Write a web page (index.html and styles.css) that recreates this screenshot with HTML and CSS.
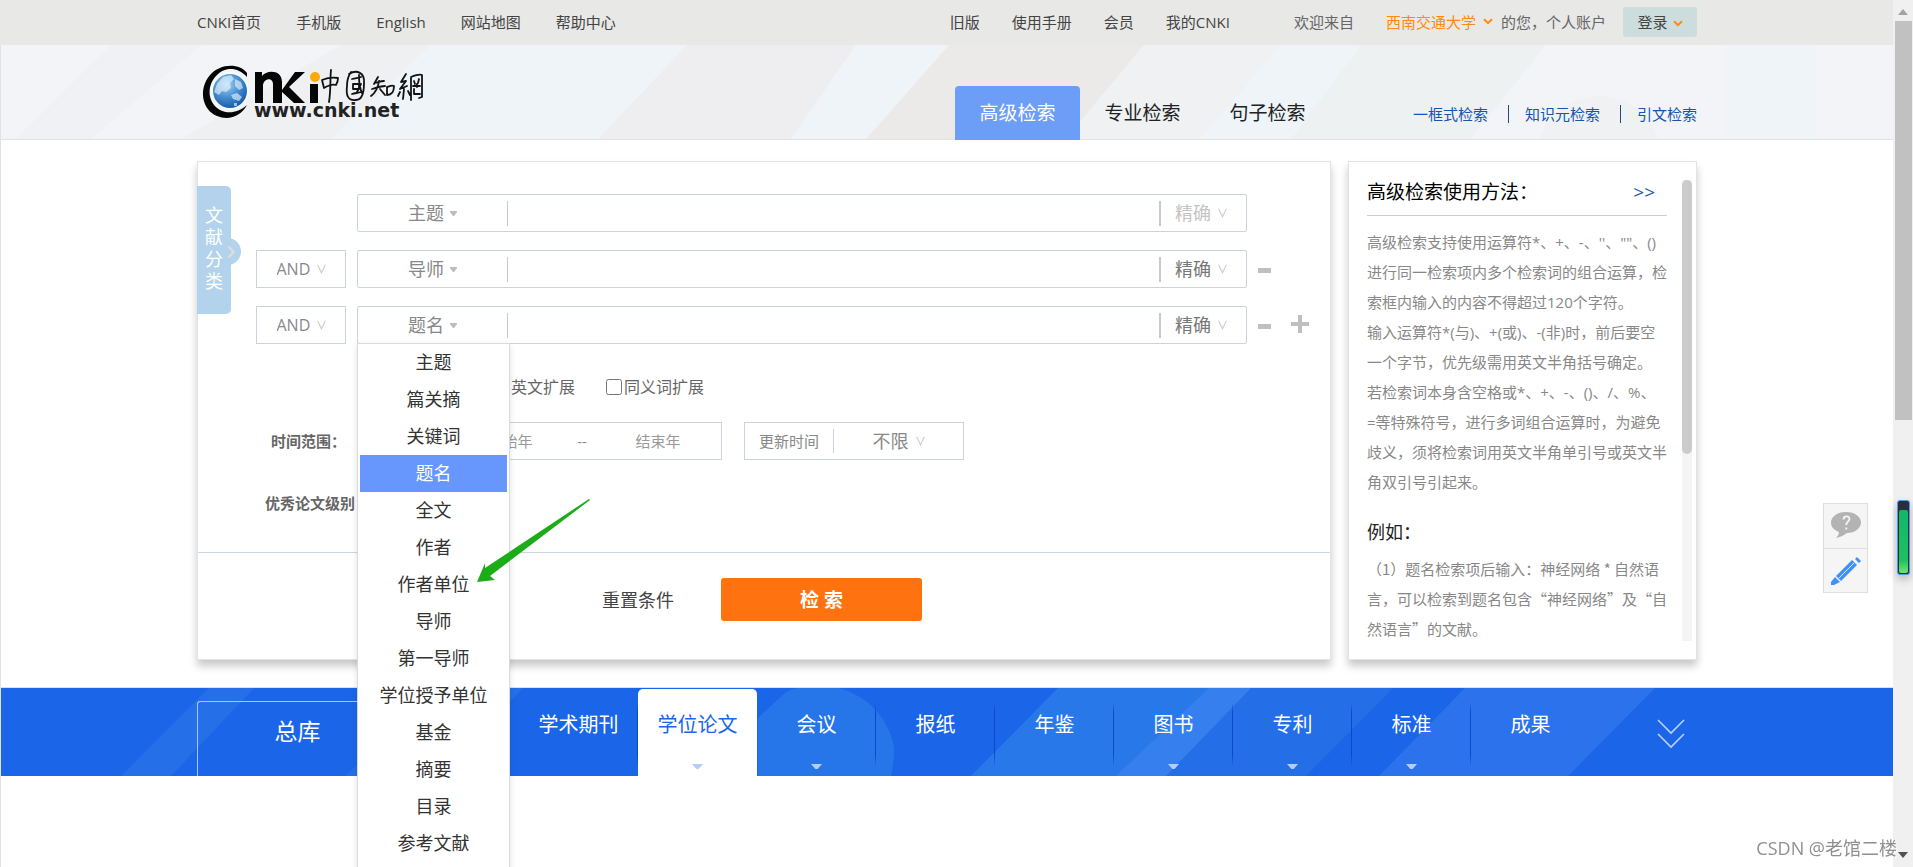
FILE: index.html
```html
<!DOCTYPE html>
<html lang="zh-CN">
<head>
<meta charset="utf-8">
<title>高级检索 - 中国知网</title>
<link rel="stylesheet" href="styles.css">
</head>
<body>
<svg class="defs" aria-hidden="true">
  <symbol id="caret" viewBox="0 0 7 5"><path d="M0 0h7v1L4 5H3L0 1z" fill="#bbb"/></symbol>
  <symbol id="vee" viewBox="0 0 9 10"><path d="M.6.8l3.9 8 3.9-8" fill="none" stroke="#ccc" stroke-width="1.1"/></symbol>
  <symbol id="down" viewBox="0 0 10 7"><path d="M1 1.2l4 4 4-4" fill="none" stroke="#ff8a0c" stroke-width="2"/></symbol>
</svg>
<div class="page">
  <div class="topbar">
    <div class="wrap topbar-in">
      <nav class="top-left">
        <a href="#">CNKI首页</a><a href="#">手机版</a><a href="#">English</a><a href="#">网站地图</a><a href="#">帮助中心</a>
      </nav>
      <nav class="top-right">
        <a href="#">旧版</a><a href="#">使用手册</a><a href="#">会员</a><a href="#">我的CNKI</a>
      </nav>
      <span class="welcome">欢迎来自</span>
      <a class="school" href="#">西南交通大学<svg class="i-down"><use href="#down"/></svg></a>
      <span class="account">的您，个人账户</span>
      <button class="login" type="button">登录<svg class="i-down"><use href="#down"/></svg></button>
    </div>
  </div>

  <header class="header">
    <svg class="backdrop" viewBox="0 0 1892 94" preserveAspectRatio="none" aria-hidden="true">
      <path d="M0 0h1892v94H0z" fill="#f2f4f7"/>
      <path d="M110 0h90L90 94H15z" fill="#f0f1f4"/>
      <path d="M340 0h90L330 94H180z" fill="#eff0f2"/>
      <path d="M430 0h256L597 94H330z" fill="#eff4f9"/>
      <path d="M686 0h169l-65 94H597z" fill="#eeedf0"/>
      <path d="M855 0h93l-83 94h-75z" fill="#eff4f9"/>
      <path d="M948 0h195l-78 94H865z" fill="#eceae9"/>
      <path d="M1143 0h137l-80 94h-135z" fill="#eff1f3"/>
      <path d="M1280 0h80l-70 94h-90z" fill="#eff4f9"/>
      <path d="M1360 0h185l-75 94h-180z" fill="#eef1f2"/>
      <path d="M1725 0h90v94h-90z" fill="#eff4f9"/>
      <circle cx="1598" cy="113" r="62" fill="#eff1f2"/>
    </svg>
    <div class="wrap header-in">
      <a class="logo" href="#" aria-label="CNKI 中国知网">
        <svg width="232" height="60" viewBox="0 0 232 60">
          <defs>
            <radialGradient id="globe" cx=".4" cy=".3" r=".75"><stop offset="0" stop-color="#a9d3f0"/><stop offset=".5" stop-color="#4a90d2"/><stop offset="1" stop-color="#1257a8"/></radialGradient>
          </defs>
          <path d="M50 11C42 0 22 2 13 13 1 27 5 48 20 54c12 5 24 0 30-11-9 8-19 9-27 5C11 41 9 25 19 14 27 5 40 4 50 15z" fill="#050505"/>
          <ellipse cx="33" cy="29" rx="19" ry="19" fill="#f7fbff"/>
          <circle cx="33" cy="29" r="17" fill="url(#globe)"/>
          <path d="M20 22l6-7 8-2 3 4-4 4 1 5-5 4-4-1-3 4-5-3zM38 17l6 3 2 6-4 2-4-4zM34 33l6-2 5 4-3 4-6-2zM37 41h3v3h-3z" fill="#e4f2fc" opacity=".65"/>
          <path d="M58 10h7v4c4-6 20-7 20 6v8L98 10h10L92 25l16 16H97L85 30v11h-9V22c0-7-9-6-10 1v18h-8z" fill="#050505"/>
          <path d="M113 22h8v19h-8z" fill="#050505"/>
          <circle cx="118" cy="15" r="5" fill="#fda90a"/>
          <g fill="none" stroke="#111" stroke-width="1.8" stroke-linecap="round" stroke-linejoin="round">
            <path d="M125 18l2 8c5-3 9-4 12-3 2-3 2-5 2-7-6-1-11 0-16 2M134 8c-1 8 0 20-2 32"/>
            <path d="M152 12c8-5 16-1 15 9 0 11-2 17-8 17-9 1-10-6-9-14 0-7 1-10 4-14M155 17c4-1 7-1 9-2M156 22h6v5h-6zM155 32c3-1 6-1 9-2M162 13c0 8 1 14 3 18M164 22l-4 8"/>
            <path d="M181 15l-4 7M178 21c4-1 6-2 9-2M182 19c-1 8-4 12-8 15M175 27c4-1 9-3 13-3M183 27l5 6M190 25v8c4 0 7-2 7-9-2-1-4 0-7 1"/>
            <path d="M209 12l-5 8 5-1-6 8 7-3M207 27l-1 10M203 30l-2 4M211 29l2 4M214 16v22M214 15c5-2 9-3 11-2v22l-3 1M217 19l1 3M222 17l-1 4M216 24h7M217 27v5h6M220 22v3"/>
          </g>
          <text x="57" y="55" class="logo-url">www.cnki.net</text>
        </svg>
      </a>
      <nav class="modes">
        <a class="mode on" href="#">高级检索</a><a class="mode" href="#">专业检索</a><a class="mode" href="#">句子检索</a>
      </nav>
      <nav class="links">
        <a href="#">一框式检索</a><i></i><a href="#">知识元检索</a><i></i><a href="#">引文检索</a>
      </nav>
    </div>
  </header>

  <main class="wrap main">
    <form class="panel search">
      <button class="side-tab" type="button">文献分类<span class="bump"><svg width="9" height="14" viewBox="0 0 9 14"><path d="M1.500 1.500l5 5.500-5 5.500" fill="none" stroke="#dcdde0" stroke-width="2.400"/></svg></span></button>
      <div class="rows">
        <div class="row">
          <div class="field">
            <label class="pick kind"><select aria-label="检索项一"><option>主题</option></select><svg class="i-caret"><use href="#caret"/></svg></label>
            <input class="term" type="text" aria-label="检索词一">
            <label class="pick match off"><select aria-label="匹配一"><option>精确</option></select><svg class="i-vee"><use href="#vee"/></svg></label>
          </div>
        </div>
        <div class="row">
          <label class="pick logic"><select aria-label="逻辑二"><option>AND</option></select><svg class="i-vee"><use href="#vee"/></svg></label>
          <div class="field">
            <label class="pick kind"><select aria-label="检索项二"><option>导师</option></select><svg class="i-caret"><use href="#caret"/></svg></label>
            <input class="term" type="text" aria-label="检索词二">
            <label class="pick match"><select aria-label="匹配二"><option>精确</option></select><svg class="i-vee"><use href="#vee"/></svg></label>
          </div>
          <button class="adjust" type="button" aria-label="删除"><svg width="13" height="20" viewBox="0 0 13 20"><path d="M0 9h13v5H0z" fill="#bfbfbf"/></svg></button>
        </div>
        <div class="row">
          <label class="pick logic"><select aria-label="逻辑三"><option>AND</option></select><svg class="i-vee"><use href="#vee"/></svg></label>
          <div class="field">
            <label class="pick kind"><select aria-label="检索项三"><option>题名</option></select><svg class="i-caret"><use href="#caret"/></svg></label>
            <input class="term" type="text" aria-label="检索词三">
            <label class="pick match"><select aria-label="匹配三"><option>精确</option></select><svg class="i-vee"><use href="#vee"/></svg></label>
            <ul class="menu" role="listbox" aria-label="检索项">
              <li role="option">主题</li><li role="option">篇关摘</li><li role="option">关键词</li><li role="option" class="on" aria-selected="true">题名</li><li role="option">全文</li><li role="option">作者</li><li role="option">作者单位</li><li role="option">导师</li><li role="option">第一导师</li><li role="option">学位授予单位</li><li role="option">基金</li><li role="option">摘要</li><li role="option">目录</li><li role="option">参考文献</li>
            </ul>
            <svg class="pointer" width="115" height="86" viewBox="0 0 115 86" aria-hidden="true"><path d="M113 1L9 70V65L1 84l18-2-5-4L114 2z" fill="#1cac19"/></svg>
          </div>
          <button class="adjust" type="button" aria-label="删除"><svg width="13" height="20" viewBox="0 0 13 20"><path d="M0 9h13v5H0z" fill="#bfbfbf"/></svg></button>
          <button class="adjust add" type="button" aria-label="添加"><svg width="18" height="20" viewBox="0 0 18 20"><path d="M7 0h4v7h7v4h-7v7H7v-7H0V7h7z" fill="#bfbfbf"/></svg></button>
        </div>
      </div>
      <div class="checks">
        <label><input type="checkbox">中英文扩展</label>
        <label><input type="checkbox">同义词扩展</label>
      </div>
      <div class="times">
        <span class="caption">时间范围：</span>
        <div class="range"><input type="text" placeholder="起始年" aria-label="起始年"><span>--</span><input class="end" type="text" placeholder="结束年" aria-label="结束年"></div>
        <div class="update"><span class="update-name">更新时间</span><label class="pick"><select aria-label="更新时间"><option>不限</option></select><svg class="i-vee"><use href="#vee"/></svg></label></div>
      </div>
      <div class="level caption">优秀论文级别：</div>
      <div class="actions">
        <button class="reset" type="reset">重置条件</button>
        <button class="go" type="submit">检 索</button>
      </div>
    </form>

    <aside class="panel help">
      <div class="help-text">
        <h2>高级检索使用方法：<a href="#">&gt;&gt;</a></h2>
        <p>高级检索支持使用运算符*、+、-、''、""、()<br>进行同一检索项内多个检索词的组合运算，检<br>索框内输入的内容不得超过120个字符。<br>输入运算符*(与)、+(或)、-(非)时，前后要空<br>一个字节，优先级需用英文半角括号确定。<br>若检索词本身含空格或*、+、-、()、/、%、<br>=等特殊符号，进行多词组合运算时，为避免<br>歧义，须将检索词用英文半角单引号或英文半<br>角双引号引起来。</p>
        <h3>例如：</h3>
        <p class="example">（1）题名检索项后输入：神经网络 * 自然语<br>言，可以检索到题名包含“神经网络”及“自<br>然语言”的文献。</p>
      </div>
      <div class="help-bar"><div></div></div>
    </aside>
  </main>

  <div class="band">
    <svg class="backdrop" viewBox="0 0 1892 88" preserveAspectRatio="none" aria-hidden="true">
      <path d="M0 0h1892v88H0z" fill="#1b66e8"/>
      <path d="M208 0h45l-83 88h-50zM430 0h92l-82 88h-95z" fill="#2570e9"/>
      <path d="M757 30L785 4C830-16 885 10 893 60q0 16-3 28H757z" fill="#2676ea"/>
      <path d="M1057 0h193l-85 88H970z" fill="#2878ea"/>
      <path d="M1247 0h145l-87 88h-143z" fill="#246fe8"/>
      <path d="M1208 0h42l-85 88h-50z" fill="#3580ee"/>
      <path d="M1464 0h190l-87 88h-189z" fill="#2c72ec"/>
    </svg>
    <nav class="wrap band-in">
      <a class="all" href="#">总库</a>
      <a class="lib" href="#">学术期刊</a>
      <a class="lib on more" href="#">学位论文</a>
      <a class="lib more" href="#">会议</a>
      <a class="lib" href="#">报纸</a>
      <a class="lib" href="#">年鉴</a>
      <a class="lib more" href="#">图书</a>
      <a class="lib more" href="#">专利</a>
      <a class="lib more" href="#">标准</a>
      <a class="lib last" href="#">成果</a>
      <button class="expand" type="button" aria-label="展开"><svg width="28" height="30" viewBox="0 0 28 30"><path d="M1 1l13 13L27 1M1 15l13 13 13-13" fill="none" stroke="#b9d1f8" stroke-width="1.600"/></svg></button>
    </nav>
  </div>
</div>

<div class="tools">
  <button type="button" aria-label="帮助"><svg width="32" height="28" viewBox="0 0 32 28"><path d="M16 0c9 0 15 5 15 10.500S25 21 17 21c-3 2-6 4-11 5 2-2 3-4 3-6-5-2-8-5-8-9.500C1 5 7 0 16 0z" fill="#b3b3b3"/><path d="M13.500 7.500c0-4 6-4 6-.5 0 2.500-3.200 2.500-3.200 6M16.300 15.500v2" fill="none" stroke="#f5f5f5" stroke-width="1.800"/></svg></button>
  <button type="button" aria-label="反馈"><svg width="32" height="32" viewBox="0 0 32 32"><path d="M6 21L22 5l5 5L11 26z" fill="#3f90fc"/><path d="M8.500 23.500L24.500 7.500" stroke="#d7e8ff" stroke-width="1"/><path d="M25 4l2-2 4 4-2 2zM5 22l5 5-6 3H1v-3z" fill="#3f90fc"/></svg></button>
</div>
<div class="scrollbar" aria-hidden="true">
  <svg width="10" height="6" viewBox="0 0 10 6"><path d="M0 6l5-6 5 6z" fill="#a3a3a3"/></svg>
  <div class="thumb"></div>
  <svg width="10" height="6" viewBox="0 0 10 6"><path d="M0 0h10L5 6z" fill="#505050"/></svg>
</div>
<div class="meter" aria-hidden="true"><div></div></div>
<div class="credit">CSDN @老馆二楼</div>
</body>
</html>
```
FILE: styles.css
```css
* { box-sizing: border-box; }
body {
  margin: 0;
  height: 100vh;
  overflow: hidden;
  background: #fff;
  color: #333;
  font: 15px/24px "Open Sans", "Noto Sans CJK SC", sans-serif;
}
a { color: inherit; text-decoration: none; }
button, select, input { font: inherit; color: inherit; border: 0; background: none; padding: 0; margin: 0; }
select { appearance: none; cursor: pointer; }
.defs { position: absolute; width: 0; height: 0; }
.page { min-height: 100vh; margin-right: 20px; border-left: 1px solid #e3e3e3; }
.wrap { width: 1500px; max-width: 100%; margin: 0 auto; }
.i-caret { width: 7px; height: 5px; }
.i-vee { width: 9px; height: 10px; }
.i-down { width: 10px; height: 7px; }
.backdrop { position: absolute; inset: 0; width: 100%; height: 100%; z-index: -1; }

/* top bar */
.topbar { background: #e8e8e6; margin-left: -1px; padding-left: 1px; color: #444; }
.topbar-in { display: flex; align-items: center; height: 45px; padding-bottom: 2px; }
.top-left { display: flex; gap: 35px; }
.top-right { display: flex; gap: 32px; margin-left: auto; }
.welcome { margin-left: 64px; color: #666; }
.school { margin-left: 32px; color: #ff8a0c; }
.school svg { margin: 0 8px 3px 7px; vertical-align: middle; }
.account { color: #666; }
.login { width: 74px; height: 30px; margin-left: 17px; border-radius: 3px; background: #cddcdc; }
.login svg { margin-left: 5px; vertical-align: middle; }

/* header */
.header { position: relative; z-index: 0; border-bottom: 1px solid #e0e2e4; }
.header-in { display: flex; align-items: flex-end; height: 94px; }
.logo { align-self: center; line-height: 0; }
.logo-url { font: bold 19px "DejaVu Sans", sans-serif; fill: #222; }
.modes { display: flex; margin: 0 83px -1px auto; }
.mode { width: 125px; height: 54px; line-height: 54px; text-align: center; font-size: 19px; color: #222; }
.mode.on { background: #6c9df7; color: #fff; border-radius: 4px 4px 0 0; }
.links { display: flex; align-items: center; color: #1454b5; padding-bottom: 13px; }
.links i { width: 1px; height: 18px; margin: 0 16px 0 20px; background: #1f4a8c; }

/* panels */
.main { display: flex; gap: 17px; padding: 21px 0 27px; }
.panel { border: 1px solid #e1e3e5; background: #fff; box-shadow: 0 6px 8px rgba(0, 0, 0, .22); }
.search { position: relative; z-index: 2; flex: 1; padding: 32px 0 37px; }
.side-tab {
  position: absolute; z-index: 0; left: -1px; top: 24px; width: 34px; height: 128px; padding: 0 8px 4px;
  border-radius: 0 5px 5px 0; background: #b3d3ec; color: #fff; font-size: 18px; line-height: 22px;
}
.bump {
  position: absolute; z-index: -1; right: -10px; top: 52px; width: 27px; height: 27px; padding-right: 5px;
  border-radius: 14px; background: #b3d3ec; display: flex; align-items: center; justify-content: flex-end; line-height: 0;
}
.rows { display: grid; gap: 18px; padding-left: 58px; }
.row { display: grid; grid-template-columns: 90px 890px 13px auto; column-gap: 11px; align-items: center; justify-content: start; }
.row .field { grid-column: 2; }
.adjust { line-height: 0; }
.add { margin-left: 9px; }
.pick { display: flex; align-items: center; justify-content: center; gap: 11px; color: #888; font-size: 18px; }
.logic { height: 38px; border: 1px solid #cbd3dd; font-size: 16px; gap: 6px; }
.field { position: relative; display: flex; align-items: center; height: 38px; border: 1px solid #cbd3dd; border-radius: 2px; }
.kind { width: 150px; height: 25px; gap: 6px; border-right: 1px solid #c6c9ce; }
.term { flex: 1; min-width: 0; height: 34px; padding: 0 10px; font-size: 16px; outline: 0; }
.match { width: 87px; height: 25px; border-left: 2px solid #c9c9c9; gap: 7px; padding-right: 5px; color: #777; }
.match.off { color: #c4c4c4; }
.menu {
  position: absolute; left: -1px; top: 36px; z-index: 3; width: 153px; margin: 0; padding: 0 2px 30px;
  list-style: none; background: #fff; border: 1px solid #d9dbdd; box-shadow: 0 2px 6px rgba(0, 0, 0, .12);
  text-align: center; font-size: 18px; line-height: 37px; color: #333;
}
.menu li { height: 37px; }
.menu .on { background: #6796fd; color: #fff; }
.pointer { position: absolute; left: 118px; top: 191px; z-index: 4; }
.checks { display: flex; gap: 31px; margin-top: 31px; padding-left: 279px; font-size: 16px; color: #666; }
.checks label { display: flex; align-items: center; gap: 2px; }
.checks input { width: 16px; height: 16px; }
.caption { font-weight: bold; color: #666; }
.times { display: flex; align-items: center; gap: 22px; margin-top: 23px; padding-left: 73px; color: #888; }
.times .caption { width: 64px; white-space: nowrap; }
.range, .update { display: flex; align-items: center; height: 38px; border: 1px solid #cbd3dd; }
.range { width: 365px; padding-left: 89px; }
.range input { flex: 1; min-width: 0; text-align: center; }
.range .end { padding-left: 8px; }
.range span { padding-left: 4px; }
.range input::placeholder { color: #999; }
.update { width: 220px; }
.update-name { padding: 0 14px; border-right: 1px solid #cbd3dd; }
.update .pick { flex: 1; gap: 7px; }
.level { margin-top: 31px; padding: 0 0 37px 67px; border-bottom: 1px solid #cbd3dd; }
.actions { display: flex; align-items: center; gap: 47px; margin-top: 25px; padding-left: 404px; }
.reset { font-size: 18px; color: #444; }
.go { width: 201px; height: 43px; border-radius: 3px; background: #ff7210; color: #fff; font-size: 19px; font-weight: bold; }

/* help */
.help { display: flex; justify-content: space-between; width: 349px; height: 499px; padding: 18px 4px 18px 18px; }
.help-text { width: 300px; overflow: hidden; white-space: nowrap; }
.help h2 {
  display: flex; justify-content: space-between; margin: 0 0 11px; padding: 0 12px 11px 0;
  border-bottom: 1px solid #cccdd9; font-size: 19px; font-weight: normal; color: #000;
}
.help h2 a { color: #1454b5; }
.help p { margin: 0; line-height: 30px; color: #888; }
.help h3 { margin: 23px 0 10px; font-size: 18px; font-weight: normal; color: #222; }
.help .example { font-family: "Noto Sans CJK SC", sans-serif; }
.help-bar { width: 10px; background: #f4f4f4; }
.help-bar div { height: 274px; border-radius: 5px; background: #cbcbcb; }

/* library band */
.band { position: relative; z-index: 0; border-top: 1px solid #dcdfe3; }
.band-in { display: flex; align-items: flex-end; height: 88px; color: #fff; }
.all {
  width: 200px; height: 75px; margin-right: 122px; border: solid #a9c6f5; border-width: 1px 0 0 1px;
  border-radius: 3px 0 0; text-align: center; font-size: 23px; line-height: 58px;
}
.lib { position: relative; width: 119px; height: 87px; text-align: center; font-size: 20px; line-height: 72px; }
.lib::before {
  content: ""; position: absolute; right: 0; top: 14px; width: 1px; height: 64px;
  background: linear-gradient(transparent, #0c48cc 15%, #0c48cc 80%, transparent);
}
.lib.last::before, .lib.on::before { display: none; }
.lib.on { background: #fff; color: #1b66e8; border-radius: 5px 5px 0 0; }
.more::after {
  content: ""; position: absolute; left: 54px; bottom: 7px; width: 11px; height: 5px;
  background: #b4cdf8; clip-path: polygon(0 0, 100% 0, 60% 100%, 40% 100%);
}
.expand { margin: 0 12px 27px auto; line-height: 0; }

/* floating pieces */
.tools { position: fixed; right: 45px; top: 503px; width: 45px; border: 1px solid #dedede; background: #f5f5f5; }
.tools button { display: flex; width: 100%; height: 44px; align-items: center; justify-content: center; }
.tools button + button { border-top: 1px solid #dedede; }
.scrollbar {
  position: fixed; right: 0; top: 0; bottom: 0; width: 20px; background: #f0f0f0;
  display: flex; flex-direction: column; align-items: center; padding: 9px 0;
}
.thumb { width: 17px; height: 399px; margin: 6px 0 auto; background: #c1c1c1; }
.meter {
  position: fixed; right: 3px; top: 500px; width: 13px; height: 75px; padding: 9px 1px 1px;
  border: 1px solid #4a9cf0; border-radius: 3px; background: #2c2d3b; box-shadow: 0 4px 8px rgba(0, 0, 0, .25);
}
.meter div { height: 100%; border-radius: 2px; background: linear-gradient(#12b866, #1cc25e 80%, #6be86a); }
.credit { position: fixed; right: 16px; bottom: 7px; font-size: 18px; color: #8f8f8f; text-shadow: 1px 1px 0 #fff; }
```
